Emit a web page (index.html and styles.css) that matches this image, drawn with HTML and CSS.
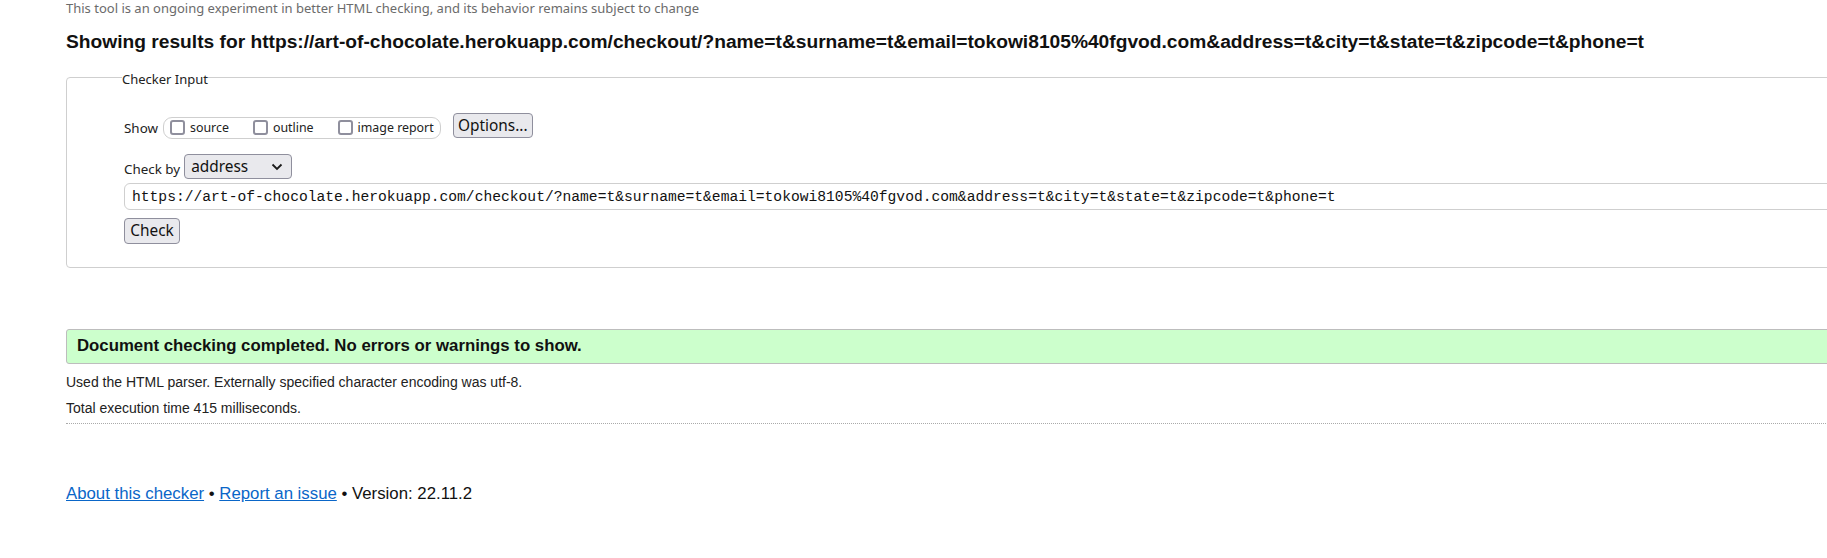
FILE: index.html
```html
<!DOCTYPE html>
<html lang="en">
<head>
<meta charset="utf-8">
<title>Ready to check - Nu Html Checker</title>
<link rel="stylesheet" href="styles.css">
</head>
<body>
<div class="page">
  <p class="intro">This tool is an ongoing experiment in better HTML checking, and its behavior remains subject to change</p>
  <h2 class="results-title">Showing results for https://art-of-chocolate.herokuapp.com/checkout/?name=t&amp;surname=t&amp;email=tokowi8105%40fgvod.com&amp;address=t&amp;city=t&amp;state=t&amp;zipcode=t&amp;phone=t</h2>

  <form class="checker-form">
    <fieldset class="checker">
      <legend class="checker-legend">Checker Input</legend>
      <div class="show-row">
        <span class="label">Show</span>
        <span class="pill">
          <label class="opt"><input type="checkbox" class="cb"><span>source</span></label>
          <label class="opt"><input type="checkbox" class="cb"><span>outline</span></label>
          <label class="opt"><input type="checkbox" class="cb"><span>image report</span></label>
        </span>
        <button type="button" class="btn btn-options">Options...</button>
      </div>
      <div class="by-row">
        <span class="label">Check by</span>
        <span class="select-wrap">
          <select class="select"><option>address</option></select>
          <svg class="chevron" width="12" height="8" viewBox="0 0 12 8"><path d="M1.5 1.5 L6 6 L10.5 1.5" fill="none" stroke="#1a1a1a" stroke-width="1.8"/></svg>
        </span>
      </div>
      <input class="url" type="text" value="https://art-of-chocolate.herokuapp.com/checkout/?name=t&amp;surname=t&amp;email=tokowi8105%40fgvod.com&amp;address=t&amp;city=t&amp;state=t&amp;zipcode=t&amp;phone=t">
      <div class="submit-row"><button type="button" class="btn btn-check">Check</button></div>
    </fieldset>
  </form>

  <div class="success"><p>Document checking completed. No errors or warnings to show.</p></div>
  <p class="details">Used the HTML parser. Externally specified character encoding was utf-8.</p>
  <p class="details details-second">Total execution time 415 milliseconds.</p>
  <hr class="sep">
  <p class="footer"><a href="#">About this checker</a> • <a href="#">Report an issue</a> • Version: 22.11.2</p>
</div>
</body>
</html>
```

FILE: styles.css
```css
html {
  overflow: hidden;
}
body {
  margin: 0;
  background: #fff;
  color: #1a1a1a;
  font-family: "Liberation Sans", Arial, sans-serif;
}
.page {
  width: 1860px;
  padding-left: 66px;
}
.intro {
  margin: 0;
  font-family: "Noto Sans", sans-serif;
  font-size: 13px;
  line-height: 16px;
  color: #6b6b6b;
  white-space: nowrap;
}
.results-title {
  margin: 15px 0 0;
  font-size: 19.2px;
  line-height: 22px;
  font-weight: bold;
  color: #111;
  white-space: nowrap;
}
.checker-form {
  margin: 14px 0 0;
}
.checker {
  margin: 0;
  border: 1px solid #cfcfcf;
  border-radius: 4px;
  padding: 0 0 23px 57px;
  font-family: "Noto Sans", sans-serif;
}
.checker-legend {
  padding: 4px 0 0;
  margin-left: -2px;
  font-size: 13px;
  line-height: 16px;
  color: #222;
}
.label {
  font-size: 13.4px;
  color: #222;
}
.show-row {
  display: flex;
  align-items: center;
  margin-top: 26px;
  height: 25px;
}
.show-row .label {
  margin-right: 5px;
  position: relative;
  top: 2px;
}
.pill {
  display: flex;
  align-items: center;
  gap: 24px;
  height: 22px;
  box-sizing: border-box;
  border: 1px solid #cfcfcf;
  border-radius: 9px;
  padding: 0 6px 0 6px;
  margin-top: 4px;
}
.opt {
  display: flex;
  align-items: center;
  gap: 5px;
  font-size: 12.4px;
  color: #222;
}
.cb {
  appearance: none;
  -webkit-appearance: none;
  margin: 0;
  width: 15px;
  height: 15px;
  box-sizing: border-box;
  border: 2px solid #8f8f9d;
  border-radius: 3px;
  background: #fff;
}
.btn {
  font-family: "Noto Sans", sans-serif;
  font-size: 15.4px;
  color: #111;
  background: #e9e9ed;
  border: 1px solid #8f8f9d;
  border-radius: 4px;
  box-sizing: border-box;
  margin: 0;
  line-height: 20px;
}
.btn-options {
  margin-left: 12px;
  height: 25px;
  width: 80px;
  padding: 0;
}
.by-row {
  display: flex;
  align-items: center;
  margin-top: 16px;
  height: 25px;
}
.by-row .label {
  margin-right: 4px;
  position: relative;
  top: 2px;
}
.select-wrap {
  position: relative;
  display: inline-block;
}
.select {
  appearance: none;
  -webkit-appearance: none;
  display: block;
  width: 108px;
  height: 25px;
  box-sizing: border-box;
  margin: 0;
  padding: 0 0 0 6px;
  font-family: "Noto Sans", sans-serif;
  font-size: 15.4px;
  color: #111;
  background: #e9e9ed;
  border: 1px solid #8f8f9d;
  border-radius: 4px;
}
.chevron {
  position: absolute;
  right: 9px;
  top: 9px;
  pointer-events: none;
}
.url {
  display: block;
  box-sizing: border-box;
  width: 100%;
  height: 27px;
  margin: 4px 0 0;
  padding: 0 0 0 7px;
  border: 1px solid #cfcfcf;
  border-radius: 6px;
  font-family: "Liberation Mono", monospace;
  font-size: 14.65px;
  color: #111;
  background: #fff;
}
.submit-row {
  margin-top: 8px;
  display: flex;
}
.btn-check {
  width: 56px;
  height: 26px;
  padding: 0;
}
.success {
  margin-top: 61px;
  background: #ccffcc;
  border: 1px solid #bdbdbd;
  border-radius: 3px;
  padding: 6px 10px 7px;
}
.success p {
  margin: 0;
  font-size: 16.8px;
  line-height: 20px;
  font-weight: bold;
  color: #111;
}
.details {
  margin: 10px 0 0;
  font-size: 14px;
  line-height: 16px;
  color: #222;
}
.details-second {
  margin-top: 10px;
}
.sep {
  margin: 7px 0 0;
  border: 0;
  border-top: 1px dotted #aaa;
  height: 0;
}
.footer {
  margin: 60px 0 0;
  font-size: 16.8px;
  line-height: 20px;
  color: #111;
}
.footer a {
  color: #0a66c8;
  text-decoration: underline;
}
```
